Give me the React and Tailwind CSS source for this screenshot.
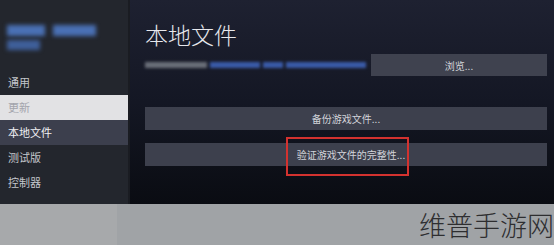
import React from "react";

const font = { fontFamily: '"Noto Sans CJK SC", "Noto Sans", sans-serif' };

export default function App() {
  const items = ["通用", "更新", "本地文件", "测试版", "控制器"];
  return (
    <div className="w-[554px] h-[245px] overflow-hidden flex flex-col" style={font}>
      <div className="h-[204px] flex">
        <div className="w-[128px] bg-[#23262d] flex flex-col">
          <div className="pt-[25px] pl-[7px] h-[70px]">
            <div className="flex gap-[8px] blur-[2px]">
              <div className="w-[38px] h-[11px] bg-[#4a70b4]"></div>
              <div className="w-[43px] h-[11px] bg-[#4a70b4]"></div>
            </div>
            <div className="mt-[4px] w-[33px] h-[10px] bg-[#3f5f9a] blur-[2px]"></div>
          </div>
          {items.map((t, i) => (
            <div
              key={t}
              className={
                "h-[25px] flex items-center pl-[8px] text-[11px] " +
                (i === 1
                  ? "bg-[#e2e2e4] text-[#a2a4ac]"
                  : i === 2
                  ? "bg-[#3c3f4d] text-[#f0f0f4]"
                  : "text-[#c4c6cc]")
              }
            >
              {t}
            </div>
          ))}
        </div>
        <div className="w-[2px] bg-[#1a1c22]"></div>
        <div className="flex-1 relative bg-gradient-to-b from-[#1e2131] via-[#141724] to-[#0a0c12] pl-[15px] pr-[7px] flex flex-col">
          <div className="mt-[20px] h-[28px] text-[23px] leading-[28px] font-light text-[#e6e7ec]">本地文件</div>
          <div className="mt-[6px] flex items-center h-[22px]">
            <div className="flex-1 flex items-center gap-[3px] blur-[1.5px]">
              <div className="w-[62px] h-[6px] bg-[#6a6e78]"></div>
              <div className="w-[50px] h-[6px] bg-[#3a5aa8]"></div>
              <div className="w-[20px] h-[6px] bg-[#3a5aa8]"></div>
              <div className="w-[80px] h-[6px] bg-[#3a5aa8]"></div>
            </div>
            <div className="w-[176px] h-[22px] bg-[#3f424f] text-[10px] text-[#d4d6dc] flex items-center justify-center">
              浏览...
            </div>
          </div>
          <div className="mt-[31px] h-[23px] bg-[#3d404d] text-[10px] text-[#d2d4da] flex items-center justify-center">
            备份游戏文件...
          </div>
          <div className="mt-[13px] h-[23px] bg-[#3d404d] text-[10px] text-[#d2d4da] flex items-center justify-center pl-[10px]">
            验证游戏文件的完整性...
          </div>
          <div className="absolute left-[156px] top-[137px] w-[123px] h-[39px] border-2 border-[#d3322f]"></div>
        </div>
      </div>
      <div className="flex-1 flex">
        <div className="w-[128px] bg-[#a7a9ab]"></div>
        <div className="flex-1 bg-[#a0a3a6] pl-[302px] pt-[4px] whitespace-nowrap text-[27px] leading-[34px] font-light text-[#2e2e30]">
          维普手游网
        </div>
      </div>
    </div>
  );
}
